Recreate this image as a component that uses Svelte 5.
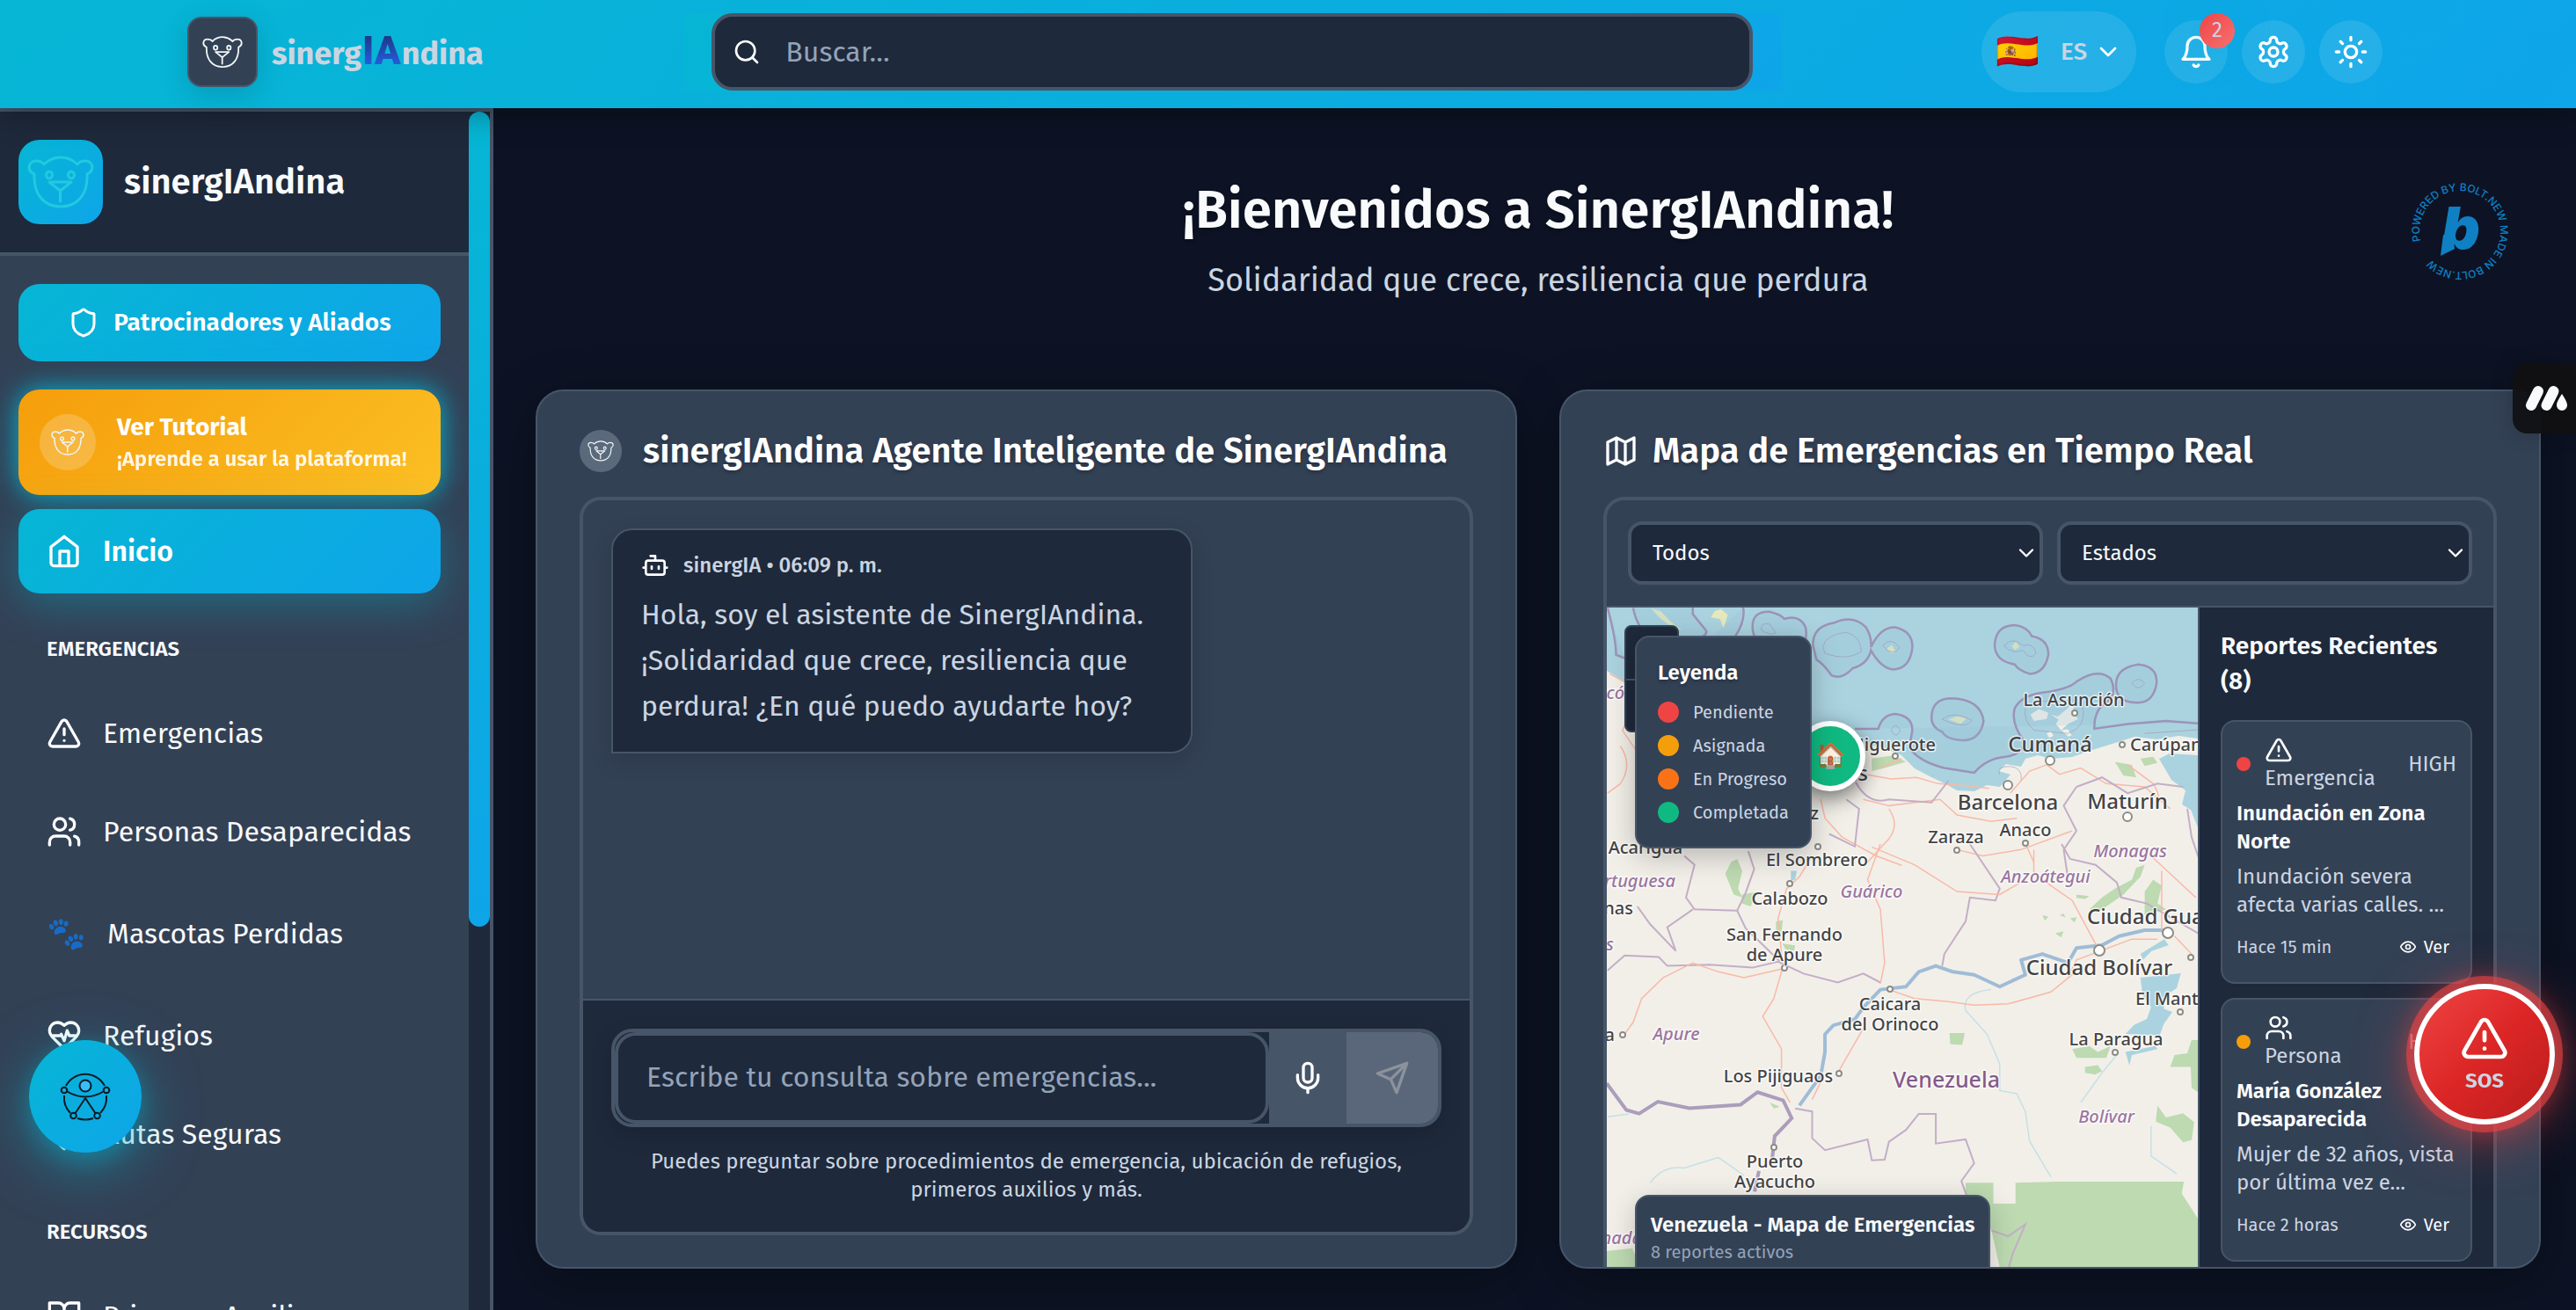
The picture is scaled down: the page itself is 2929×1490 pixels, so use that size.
<script>
  const circle = (cx, cy, r) => `M${cx - r} ${cy}a${r} ${r} 0 1 0 ${2 * r} 0a${r} ${r} 0 1 0 ${-2 * r} 0`;

  const icons = {
    search: circle(11, 11, 8) + 'M21 21l-4.3-4.3',
    chevron: 'm6 9 6 6 6-6',
    bell: 'M6 8a6 6 0 0 1 12 0c0 7 3 9 3 9H3s3-2 3-9M10.3 21a1.94 1.94 0 0 0 3.4 0',
    settings:
      'M12.22 2h-.44a2 2 0 0 0-2 2v.18a2 2 0 0 1-1 1.73l-.43.25a2 2 0 0 1-2 0l-.15-.08a2 2 0 0 0-2.73.73l-.22.38a2 2 0 0 0 .73 2.73l.15.1a2 2 0 0 1 1 1.72v.51a2 2 0 0 1-1 1.74l-.15.09a2 2 0 0 0-.73 2.73l.22.38a2 2 0 0 0 2.73.73l.15-.08a2 2 0 0 1 2 0l.43.25a2 2 0 0 1 1 1.73V20a2 2 0 0 0 2 2h.44a2 2 0 0 0 2-2v-.18a2 2 0 0 1 1-1.73l.43-.25a2 2 0 0 1 2 0l.15.08a2 2 0 0 0 2.73-.73l.22-.39a2 2 0 0 0-.73-2.73l-.15-.08a2 2 0 0 1-1-1.74v-.5a2 2 0 0 1 1-1.74l.15-.09a2 2 0 0 0 .73-2.73l-.22-.38a2 2 0 0 0-2.73-.73l-.15.08a2 2 0 0 1-2 0l-.43-.25a2 2 0 0 1-1-1.73V4a2 2 0 0 0-2-2z' +
      circle(12, 12, 3),
    sun:
      circle(12, 12, 4) +
      'M12 2v2M12 20v2M4.93 4.93l1.41 1.41M17.66 17.66l1.41 1.41M2 12h2M20 12h2M6.34 17.66l-1.41 1.41M19.07 4.93l-1.41 1.41',
    shield:
      'M20 13c0 5-3.5 7.5-7.66 8.95a1 1 0 0 1-.67-.01C7.5 20.5 4 18 4 13V6a1 1 0 0 1 1-1c2 0 4.5-1.2 6.24-2.72a1.17 1.17 0 0 1 1.52 0C14.51 3.81 17 5 19 5a1 1 0 0 1 1 1z',
    home: 'm3 9 9-7 9 7v11a2 2 0 0 1-2 2H5a2 2 0 0 1-2-2zM9 22V12h6v10',
    alert: 'm21.73 18-8-14a2 2 0 0 0-3.48 0l-8 14A2 2 0 0 0 4 21h16a2 2 0 0 0 1.73-3ZM12 9v4M12 17h.01',
    users:
      'M16 21v-2a4 4 0 0 0-4-4H6a4 4 0 0 0-4 4v2M22 21v-2a4 4 0 0 0-3-3.87M16 3.13a4 4 0 0 1 0 7.75' +
      circle(9, 7, 4),
    heart:
      'M19 14c1.49-1.46 3-3.21 3-5.5A5.5 5.5 0 0 0 16.5 3c-1.76 0-3 .5-4.5 2-1.5-1.5-2.74-2-4.5-2A5.5 5.5 0 0 0 2 8.5c0 2.3 1.5 4.05 3 5.5l7 7ZM3.22 12H9.5l.5-1 2 4.5 2-7 1.5 3.5h5.27',
    pin: 'M20 10c0 6-8 12-8 12s-8-6-8-12a8 8 0 0 1 16 0Z' + circle(12, 10, 3),
    book: 'M2 3h6a4 4 0 0 1 4 4v14a3 3 0 0 0-3-3H2zM22 3h-6a4 4 0 0 0-4 4v14a3 3 0 0 1 3-3h7z',
    bot: 'M12 8V4H8M6 8h12a2 2 0 0 1 2 2v8a2 2 0 0 1-2 2H6a2 2 0 0 1-2-2v-8a2 2 0 0 1 2-2ZM2 14h2M20 14h2M15 13v2M9 13v2',
    mic: 'M12 2a3 3 0 0 0-3 3v7a3 3 0 0 0 6 0V5a3 3 0 0 0-3-3ZM19 10v2a7 7 0 0 1-14 0v-2M12 19v3',
    send: 'm22 2-7 20-4-9-9-4ZM22 2 11 13',
    map: 'M3 6l6-3 6 3 6-3v15l-6 3-6-3-6 3zM9 3v15M15 6v15',
    eye: 'M2 12s3-7 10-7 10 7 10 7-3 7-10 7-10-7-10-7Z' + circle(12, 12, 3),
  };

  const emergencyLinks = [
    { icon: 'alert', label: 'Emergencias' },
    { icon: 'users', label: 'Personas Desaparecidas' },
    { emoji: '🐾', label: 'Mascotas Perdidas' },
    { icon: 'heart', label: 'Refugios' },
    { icon: 'pin', label: 'Rutas Seguras' },
  ];

  const legend = [
    { tone: 'red', label: 'Pendiente' },
    { tone: 'amber', label: 'Asignada' },
    { tone: 'orange', label: 'En Progreso' },
    { tone: 'green', label: 'Completada' },
  ];

  const reports = [
    {
      tone: 'red', icon: 'alert', type: 'Emergencia', priority: 'HIGH',
      title: 'Inundación en Zona Norte', text: 'Inundación severa afecta varias calles. ...', time: 'Hace 15 min',
    },
    {
      tone: 'amber', icon: 'users', type: 'Persona', priority: 'HIGH',
      title: 'María González Desaparecida', text: 'Mujer de 32 años, vista por última vez e...', time: 'Hace 2 horas',
    },
  ];

  // [text, x, y, anchor, kind]
  const places = [
    ['La Asunción', 531, 112, 'middle', 'town'],
    ['Cumaná', 504, 164, 'middle', 'city'],
    ['Carúpano', 595, 163, 'start', 'town'],
    ['Higuerote', 374, 163, 'end', 'town'],
    ['Caracas', 297, 197, 'end', 'city'],
    ['Barcelona', 456, 230, 'middle', 'city'],
    ['Maturín', 592, 229, 'middle', 'city'],
    ['Cruz', 241, 241, 'end', 'town'],
    ['Anaco', 476, 260, 'middle', 'town'],
    ['Zaraza', 397, 268, 'middle', 'town'],
    ['Monagas', 595, 284, 'middle', 'state'],
    ['Falcón', 32, 104, 'end', 'state'],
    ['Acarigua', 44, 280, 'middle', 'town'],
    ['El Sombrero', 239, 294, 'middle', 'town'],
    ['Calabozo', 208, 338, 'middle', 'town'],
    ['Guárico', 301, 330, 'middle', 'state'],
    ['Portuguesa', 78, 318, 'end', 'state'],
    ['Barinas', 30, 349, 'end', 'town'],
    ['Barinas', 8, 390, 'end', 'state'],
    ['San Fernando', 202, 379, 'middle', 'town'],
    ['de Apure', 202, 402, 'middle', 'town'],
    ['Caicara', 322, 458, 'middle', 'town'],
    ['del Orinoco', 322, 481, 'middle', 'town'],
    ['Ciudad Bolívar', 560, 418, 'middle', 'city'],
    ['Ciudad Guayana', 546, 360, 'start', 'city'],
    ['Anzoátegui', 499, 313, 'middle', 'state'],
    ['El Manteco', 601, 452, 'start', 'town'],
    ['La Paragua', 579, 498, 'middle', 'town'],
    ['Elorza', 9, 493, 'end', 'town'],
    ['Apure', 79, 492, 'middle', 'state'],
    ['Los Pijiguaos', 195, 540, 'middle', 'town'],
    ['Venezuela', 386, 546, 'middle', 'country'],
    ['Bolívar', 568, 586, 'middle', 'state'],
    ['Puerto', 191, 637, 'middle', 'town'],
    ['Ayacucho', 191, 660, 'middle', 'town'],
    ['Vichada', 40, 724, 'end', 'state'],
  ];

  const towns = [
    [532, 120, 3], [586, 156, 3], [504, 174, 5], [456, 202, 5], [328, 169, 3], [592, 238, 5], [476, 268, 3],
    [398, 276, 3], [240, 272, 3], [208, 314, 3], [202, 410, 3], [322, 434, 3], [560, 390, 6], [638, 370, 6],
    [664, 398, 3], [652, 460, 3], [578, 506, 3], [18, 486, 3], [264, 530, 3], [190, 614, 3],
  ];

  let query = $state('');
  let message = $state('');
  let kind = $state('Todos');
  let status = $state('Estados');
</script>

{#snippet icon(name)}
  <svg class="icon" viewBox="0 0 24 24" aria-hidden="true"><path d={icons[name]} /></svg>
{/snippet}

{#snippet bear()}
  <svg class="bear" viewBox="-2 -1 76 60" aria-hidden="true">
    <path d="M6 20C-3 16 -1 5 8 5c4 0 7 1 9 4C22 4 28 1 36 1s14 3 19 8c2-3 5-4 9-4 9 0 11 11 2 15 1 22-10 37-30 37S5 42 6 20z" />
    <ellipse cx="23" cy="21" rx="3.5" ry="4" /><ellipse cx="48" cy="21" rx="3.5" ry="4" />
    <path d="M23 29h25L35.500 39zM35.500 39v12" />
  </svg>
{/snippet}

<div class="app">
  <header class="topbar">
    <a class="brand" href="#inicio">
      <span class="brand-mark">{@render bear()}</span>
      <span class="brand-name">sinerg<b>IA</b>ndina</span>
    </a>
    <div class="search-band">
      <label class="search">
        {@render icon('search')}
        <input type="search" placeholder="Buscar..." aria-label="Buscar" bind:value={query} />
      </label>
    </div>
    <div class="actions">
      <button class="lang" type="button" aria-label="Idioma: español">
        <span class="flag">🇪🇸</span><span>ES</span>{@render icon('chevron')}
      </button>
      <button class="round" type="button" aria-label="Notificaciones">
        {@render icon('bell')}<span class="badge">2</span>
      </button>
      <button class="round" type="button" aria-label="Configuración">{@render icon('settings')}</button>
      <button class="round" type="button" aria-label="Tema claro">{@render icon('sun')}</button>
    </div>
  </header>

  <div class="body">
    <aside class="sidebar">
      <div class="side-scroll">
        <div class="side-head">
          <span class="side-logo">{@render bear()}</span>
          <strong>sinergIAndina</strong>
        </div>
        <nav class="side-nav">
          <a class="sponsors" href="#patrocinadores">{@render icon('shield')}Patrocinadores y Aliados</a>
          <button class="tutorial" type="button">
            <span class="tutorial-mark">{@render bear()}</span>
            <span class="tutorial-text"><b>Ver Tutorial</b><small>¡Aprende a usar la plataforma!</small></span>
          </button>
          <a class="link active" href="#inicio">{@render icon('home')}Inicio</a>
          <h2>EMERGENCIAS</h2>
          <ul>
            {#each emergencyLinks as l}
              <li>
                <a class="link" class:tall={l.emoji} href="#{l.label}">
                  {#if l.emoji}<span class="emoji">{l.emoji}</span>{:else}{@render icon(l.icon)}{/if}{l.label}
                </a>
              </li>
            {/each}
          </ul>
          <h2>RECURSOS</h2>
          <ul>
            <li><a class="link" href="#primeros-auxilios">{@render icon('book')}Primeros Auxilios</a></li>
          </ul>
        </nav>
      </div>
      <div class="track"><div class="thumb"></div></div>
    </aside>

    <main>
      <section class="hero">
        <h1>¡Bienvenidos a SinergIAndina!</h1>
        <p>Solidaridad que crece, resiliencia que perdura</p>
        <a class="bolt" href="#bolt" aria-label="Powered by Bolt.new">
          <svg viewBox="0 0 120 120">
            <defs><path id="ring" d="M15.400 71.100A46 46 0 1 1 15.500 71.500" /></defs>
            <text class="ring-text"><textPath href="#ring">POWERED BY BOLT.NEW MADE IN BOLT.NEW</textPath></text>
            <text class="bolt-b" x="39" y="81">b</text>
            <path class="bolt-tail" d="M41 64L38 88L54 80L52 66z" />
          </svg>
        </a>
      </section>

      <div class="cards">
        <section class="card">
          <h2 class="card-title"><span class="avatar">{@render bear()}</span>sinergIAndina Agente Inteligente de SinergIAndina</h2>
          <div class="chat">
            <div class="messages">
              <article class="message">
                <header>{@render icon('bot')}<span>sinergIA • 06:09 p. m.</span></header>
                <p>Hola, soy el asistente de SinergIAndina. ¡Solidaridad que crece, resiliencia que perdura! ¿En qué puedo ayudarte hoy?</p>
              </article>
            </div>
            <form class="composer" onsubmit={(e) => e.preventDefault()}>
              <div class="composer-row">
                <input type="text" placeholder="Escribe tu consulta sobre emergencias..." aria-label="Consulta" bind:value={message} />
                <button class="mic" type="button" aria-label="Dictar">{@render icon('mic')}</button>
                <button class="send" type="submit" aria-label="Enviar" disabled={!message}>{@render icon('send')}</button>
              </div>
              <p>Puedes preguntar sobre procedimientos de emergencia, ubicación de refugios, primeros auxilios y más.</p>
            </form>
          </div>
        </section>

        <section class="card">
          <h2 class="card-title map-title">{@render icon('map')}Mapa de Emergencias en Tiempo Real</h2>
          <div class="mapbox">
            <div class="filters">
              <div class="select">
                <select aria-label="Tipo" bind:value={kind}><option>Todos</option><option>Emergencias</option></select>
                {@render icon('chevron')}
              </div>
              <div class="select">
                <select aria-label="Estado" bind:value={status}><option>Estados</option><option>Pendiente</option></select>
                {@render icon('chevron')}
              </div>
            </div>
            <div class="map-body">
              <div class="map">
                <svg class="terrain" viewBox="0 0 672 750" preserveAspectRatio="xMinYMin slice" role="img" aria-label="Mapa de Venezuela">
                  <rect width="672" height="750" fill="#f2efe9" />
                  <path fill="#aad3df" d="M0 0H672V149L650 146L625 150L600 147L578 154L549 163L529 170L505 172L490 168L476 172L471 181L454 178L446 186L459 190L447 204L432 202L418 209L398 208L384 200L369 193L350 183L335 168L316 160L290 154L250 150L120 150L60 100L20 84L0 72z" />
                  <path fill="#aad3df" d="M628 172L640 166L672 168V250L664 230L654 224L658 208L642 196z" />
                  <g class="scaled" transform="translate(-67 -271) scale(.4847 .3571)">
                    <path fill="#bddab1" d="M760 1240l50-10 30 20-50 20-30 10zM1330 1250l40 10 10 40-30-6zM1390 1240l30-6 10 20-30 10z" />
                    <path fill="#f2efe9" d="M1132 1100l20-18 22 12-4 20-30 6zM1180 1100l16 6 20-22 18-20-2 30 12 20-24 16-16 20-12-20 6-14zM1170 1160l10-8 6 16-10 6zM1205 1150l14-4 10 20-8 4z" />
                    <path fill="#e6e8bd" d="M940 1115l22-10 20 8-14 16zM1088 882l10-14 8 16-10 10zM795 890l12-12 8 20-8 8zM242 762l22 8 24 34 26 26-20-6-30-30zM392 770l14-6 16 18-10 44-8-30-22-6z" />
                    <path class="sea" d="M200 760Q210 830 250 870Q290 900 330 870Q380 850 370 830L340 780V758M458 758Q464 800 440 850Q420 890 380 860M140 760Q160 860 160 910L180 920" />
                    <path class="sea" d="M480 820Q480 770 520 772Q545 780 555 795Q590 780 604 820Q612 860 590 900Q560 930 520 890Q480 870 480 820z" />
                    <path class="sea" d="M622 880Q620 820 670 808Q715 780 745 820Q760 850 758 885Q780 820 815 822Q856 835 855 885Q850 955 808 956Q780 950 758 895Q750 940 715 952Q690 990 665 975Q648 940 630 925z" />
                    <path class="sea" d="M1048 880Q1050 815 1095 815Q1125 820 1135 850Q1175 860 1174 910Q1165 970 1130 970Q1105 960 1095 940Q1050 930 1048 880z" />
                    <path class="sea" d="M900 1110Q900 1050 945 1048Q1015 1050 1022 1120Q1015 1180 975 1182Q935 1180 925 1155Q900 1140 900 1110z" />
                    <path class="sea" d="M1333 1000Q1335 950 1385 940Q1430 945 1428 1000Q1420 1065 1380 1062Q1330 1060 1333 1000z" />
                    <path class="sea" d="M720 1145H775Q785 1100 815 1098Q855 1105 855 1150L848 1205Q870 1250 930 1270L1000 1285Q1030 1240 1070 1235Q1110 1230 1120 1190Q1085 1130 1095 1080Q1110 1040 1160 1030Q1220 1020 1240 995Q1290 950 1320 985Q1340 1040 1300 1070Q1280 1100 1282 1145L1360 1130L1450 1120L1528 1128" />
                    <path class="sea thin" d="M500 830Q500 805 520 812L535 840Q520 850 500 830M645 885Q650 845 700 838Q735 850 735 900Q700 930 650 905zM785 880Q805 850 825 885Q810 920 785 880M1070 880Q1090 850 1115 880Q1140 870 1145 905Q1130 930 1115 895Q1090 910 1070 880M925 1115Q950 1085 995 1118Q980 1150 925 1115M1370 1000Q1385 975 1400 1000Q1385 1030 1370 1000M805 1150q10-30 22 0q-10 30-22 0M1120 1080Q1130 1050 1200 1060Q1250 1040 1256 1090Q1260 1140 1220 1160L1140 1150Q1115 1120 1120 1080M1060 1290Q1050 1265 1085 1265Q1115 1270 1110 1310M1400 1160L1528 1148" />
                    <path class="road" d="M745 1290l60 15 60-5 50 20 60 5 60 10M780 1270L830 1240M1085 1350L1130 1280L1180 1255M1170 1260l30 30 50-20 60 50 90 10 60 70M1430 1400q10-40-10-80l-60-60M740 1370l60 20 120-20 40 50 80 20 60-10M640 1370l10 60 40 60 80 60 60 30M800 1400q30 60-10 110l-40 60M1120 1510l20 60M960 1530l60 20 90-20 120-60M145 970l40 30 10 90-20 60 30 60M170 1200q30 60 0 120l-30 30" />
                    <path class="limit" d="M720 1310q30 80 80 60l100 10 40-70M700 1370l30 30-10 120-60-40M1240 1330l-30 60 30 80-30 60 10 90M1240 1330l60-30 60 50 70-30 60 10M1500 1400l10 90 20 80" />
                  </g>
                  <g class="scaled" transform="translate(-67 269) scale(.4847 .338)">
                    <path class="wood" d="M980 1140h65v70h52v-70l100-4h295l-5 40 40 90v160H1060l-20-130h-60zM138 1370l60-10 20 70h-80zM942 636h36l-6 40-28-2zM1510 660h20v180l-20-20-2-70h-48l10-40 30-6zM1330 150l40-30 10-40 20-10-10 40-40 60-20 20-40 40-20-10 30-40zM1400 160l20-40 20 20-10 60 20 20-50 20zM1240 170l30 5-10 10-20-4zM430 60l14-10 12 40-10 60 10 30-20-10-20-70zM455 170l40-10-20 50-20-10zM535 260l16-4-4 60-12 10zM550 335l30 6-2 18-20-4zM1230 690l40-10 20 20 30-20-10 40-40 0-30 0zM1260 750l30-6 10 20-16 12-24-6zM1430 880l20 40 40-14 26 30-6 60-20 8-30-50-34-20zM520 870l24 14-14 6z" />
                    <path class="wood" d="M1160 240l14 4-8 14zM1190 300l20-6-6 20zM1200 240l10-6 4 12zM1225 250l16-4-6 18z" />
                    <path class="lake" d="M1390 450l95-15-10 50-30 30 0 40 20 10-20 40-10 40-80-6 20-30 30-20 10-40-20-40zM1446 320l10 20-40 20-20 30-6-20zM1355 700l70-20 5 10-60 20-6 35zM1330 700l20-5M570 90h14l-4 30-10 4z" />
                    <path class="river" d="M1460 290l-60 0-60 20-40 30-60 10-20 50-60-30-50 20 10 50-60 40-60-40-50-10-40-20-40 20-30 50-60 10-40 60-20 40-50 20-20 30 0 60-10 80-30 60-20 40" />
                    <path class="river small" d="M980 560q-10-60 60-70M980 560l50 80 30 100v90l40 10 20 60 10 100 50 120M1340 700l-40 70-50 100M140 918l50-10M240 1140q30-60 80-50l80-35 60 60M1415 950v100l60 60" />
                    <path class="limit strong" d="M138 805l46 90 30 12 44-40 74 22 120-12 40-42 60 28 20 60-40 60-6 80M495 1100l-10 70" />
                    <path class="limit" d="M320 40l24 30-20 110 20 40 100 4 20-60 20-80-14-60M444 224l20 60 80 110M340 220l-60 60 20 80-60-90-30-60M140 425l40-50 80 5 20 30 100-4 100 10 60-20 60 40 80 30 60-30 40 30M990 0l70 150-10 40-60-10-10 80-50 110-5 40M1205 0l20 50 60 20 50 60 10 50 60 20 120 100M580 890l40 10 0 90 30 40 100-36 10 70 30-2 10-60 40-40 30-54h40v100l70-14 20 80-30 60 20 80M1040 1300l40 20 40-40-30 100-10 50" />
                    <path class="road" d="M620 40l-30 70-30 40-20 100 10 150M550 420l-90 30-60-20-60-30-70 50-50 70-20 80-20 40M550 420l-20 100-26 60 44 110v130l20 50M780 0l-30 120 30 100 10 180-10 70M800 490l60 30 80 10 60 12 80-4 100-40 60-70M1220 450l20-60 130-70 60 0M1140 20l0 80 90 90 60 160M1440 90l0 200M1400 20l120 160M740 620l-40 100-20 50M620 860l20-60M760 10l100 60 100 90 100 10 60-50M1470 310l40 60" />
                  </g>
                  {#each towns as [x, y, r]}<circle class="dot-town" cx={x} cy={y} {r} />{/each}
                  {#each places as [text, x, y, anchor, type]}
                    <text class="place {type}" {x} {y} text-anchor={anchor}>{text}</text>
                  {/each}
                </svg>
                <div class="zoom">
                  <button type="button" aria-label="Acercar"></button>
                  <button type="button" aria-label="Alejar"></button>
                </div>
                <span class="marker">🏠</span>
                <div class="legend">
                  <h3>Leyenda</h3>
                  <ul>
                    {#each legend as l}<li><i class="dot {l.tone}"></i>{l.label}</li>{/each}
                  </ul>
                </div>
                <div class="map-info"><strong>Venezuela - Mapa de Emergencias</strong><span>8 reportes activos</span></div>
              </div>
              <div class="reports">
                <h3>Reportes Recientes (8)</h3>
                {#each reports as r}
                  <article class="report">
                    <div class="report-top">
                      <i class="dot {r.tone}"></i>
                      <span class="type">{@render icon(r.icon)}{r.type}</span>
                      <span>{r.priority}</span>
                    </div>
                    <h4>{r.title}</h4>
                    <p>{r.text}</p>
                    <footer><time>{r.time}</time><button type="button">{@render icon('eye')}Ver</button></footer>
                  </article>
                {/each}
              </div>
            </div>
          </div>
        </section>
      </div>
    </main>
  </div>

  <button class="access" type="button" aria-label="Accesibilidad">
    <svg viewBox="0 0 56 56" aria-hidden="true">
      <path d="M6 16A25 25 0 0 1 50 16M4 27Q3 39 11 47M52 27Q53 39 45 47M19 53Q28 56 37 53" />
      <path d="M6.500 22Q28 35 49.500 22M28 30L16 48M28 30L40 48" />
      <circle class="head" cx="28" cy="16" r="6.500" />
      <circle class="joint" cx="4" cy="21" r="3.300" /><circle class="joint" cx="52" cy="21" r="3.300" />
      <circle class="joint" cx="14.500" cy="50" r="3.300" /><circle class="joint" cx="41.500" cy="50" r="3.300" />
    </svg>
  </button>

  <button class="widget" type="button" aria-label="Abrir panel">
    <svg viewBox="0 0 48 28" aria-hidden="true">
      <path class="bar" d="M6 22L14 6M23.500 22L31.500 6" />
      <path class="drop" d="M41 9C44 14 47 18 47 22A6 6 0 0 1 35 22C35 18 38 14 41 9z" />
    </svg>
  </button>

  <button class="sos" type="button">{@render icon('alert')}SOS</button>
</div>

<style>
  :global(body) { background: #0d1324; }
  .app, .app :global(*) { box-sizing: border-box; }
  .app {
    height: 100vh;
    display: flex;
    flex-direction: column;
    overflow: hidden;
    font-family: 'Fira Sans', 'Noto Sans', sans-serif;
    color: #f8fafc;
    font-size: 24px;
    line-height: 32px;
  }
  button, input, select { font: inherit; color: inherit; border: 0; margin: 0; padding: 0; background: none; }
  a { color: inherit; text-decoration: none; }
  h1, h2, h3, h4, p, ul { margin: 0; padding: 0; }
  ul { list-style: none; }
  .icon { width: 40px; height: 40px; flex: none; fill: none; stroke: #fff; stroke-width: 2; stroke-linecap: round; stroke-linejoin: round; }
  .bear { display: block; fill: none; stroke: #f1f5f9; stroke-width: 3; stroke-linejoin: round; stroke-linecap: round; }

  .topbar {
    position: relative;
    z-index: 5;
    flex: none;
    height: 123px;
    padding: 0 220px 5px 213px;
    display: flex;
    align-items: center;
    justify-content: space-between;
    background: linear-gradient(135deg, #06b6d4, #0ea5e9);
    box-shadow: 0 8px 32px rgba(0, 0, 0, 0.3);
  }
  .brand { display: flex; align-items: center; gap: 16px; }
  .brand-mark {
    width: 80px; height: 80px; border-radius: 16px; border: 2px solid #475569; background: #334155;
    display: grid; place-items: center; box-shadow: 0 8px 32px rgba(0, 0, 0, 0.15);
  }
  .brand-mark .bear { width: 46px; }
  .brand-name { font-size: 36px; line-height: 48px; font-weight: 700; color: #cbd5e1; }
  .brand-name b {
    font-family: Roboto, sans-serif; font-size: 44px; font-weight: 900; padding: 0 1px;
    background: linear-gradient(180deg, #1e3a8a 20%, #2563eb 90%); background-clip: text; color: transparent;
  }
  .search-band { width: 1248px; padding: 0 32px; background: linear-gradient(135deg, #06b6d4, #0ea5e9); }
  .search {
    display: flex; align-items: center; gap: 28px; height: 88px; padding: 0 20px;
    border: 4px solid #475569; border-radius: 24px; background: #1e293b;
  }
  .search .icon { width: 32px; height: 32px; }
  .search input { flex: 1; min-width: 0; font-size: 32px; outline: 0; }
  input::placeholder { color: #94a3b8; opacity: 1; }
  .actions { display: flex; align-items: center; gap: 16px; }
  .lang {
    display: flex; align-items: center; width: 176px; height: 92px; padding: 0 16px; margin-right: 16px;
    border-radius: 46px; background: rgba(255, 255, 255, 0.1); font-size: 28px; font-weight: 500; color: #cbd5e1;
  }
  .lang .icon { width: 32px; height: 32px; margin-left: auto; }
  .flag { font-size: 40px; line-height: 48px; margin-right: 24px; }
  .round {
    position: relative; width: 72px; height: 72px; border-radius: 50%; background: rgba(255, 255, 255, 0.1);
    display: grid; place-items: center;
  }
  .badge {
    position: absolute; top: -8px; right: -8px; width: 40px; height: 40px; border-radius: 50%;
    background: linear-gradient(135deg, #ef4444, #f87171); color: #cbd5e1; line-height: 38px; text-align: center;
    box-shadow: 0 0 40px rgba(6, 182, 212, 0.4);
  }

  .body { flex: 1; min-height: 0; display: flex; }
  .sidebar { width: 561px; flex: none; display: flex; border-top: 4px solid #475569; border-right: 4px solid #475569; background: #334155; }
  .side-scroll { flex: 1; min-width: 0; overflow: hidden; }
  .side-head {
    height: 164px; padding: 0 21px; display: flex; align-items: center; gap: 24px;
    background: #1e293b; border-bottom: 4px solid #475569; font-size: 40px; line-height: 48px;
  }
  .side-head strong { font-weight: 600; }
  .side-logo { width: 96px; height: 96px; border-radius: 24px; display: grid; place-items: center; background: linear-gradient(135deg, #06b6d4, #0ea5e9); }
  .side-logo .bear { width: 76px; stroke: #22c9e0; }
  .side-nav { padding: 32px 32px 0 21px; display: flex; flex-direction: column; }
  .sponsors {
    height: 88px; border-radius: 24px; display: flex; align-items: center; justify-content: center; gap: 16px;
    font-size: 28px; font-weight: 600; background: linear-gradient(135deg, #06b6d4, #0ea5e9); color: #fff;
  }
  .sponsors .icon { width: 36px; height: 36px; }
  .tutorial {
    margin-top: 32px; height: 120px; padding: 0 24px; border-radius: 24px; display: flex; align-items: center; gap: 24px;
    text-align: left; color: #fff; background: linear-gradient(135deg, #f59e0b, #fbbf24);
    box-shadow: 0 0 28px rgba(6, 182, 212, 0.9), 0 0 56px rgba(6, 182, 212, 0.2);
  }
  .tutorial-mark { width: 64px; height: 64px; border-radius: 50%; background: rgba(255, 255, 255, 0.2); display: grid; place-items: center; }
  .tutorial-mark .bear { width: 38px; }
  .tutorial-text { display: flex; flex-direction: column; padding-top: 2px; }
  .tutorial-text b { font-size: 28px; line-height: 36px; font-weight: 700; }
  .tutorial-text small { font-size: 24px; line-height: 36px; font-weight: 600; opacity: 0.9; }
  .link { height: 96px; padding: 0 32px; display: flex; align-items: center; gap: 24px; font-size: 32px; line-height: 48px; white-space: nowrap; }
  .link.tall { height: 104px; }
  .link.active {
    margin-top: 16px; border-radius: 24px; font-weight: 600; color: #fff;
    background: linear-gradient(135deg, #06b6d4, #0ea5e9); box-shadow: 0 12px 48px rgba(6, 182, 212, 0.35);
  }
  .emoji { font-size: 36px; }
  .side-nav h2 { margin: 47px 0 32px; padding: 0 32px; font-size: 24px; line-height: 32px; font-weight: 600; }
  .side-nav ul { display: flex; flex-direction: column; gap: 16px; }
  .track { width: 24px; background: #1e293b; }
  .thumb { height: 68%; border-radius: 12px; background: linear-gradient(180deg, #06b6d4, #0ea5e9); }

  main { flex: 1; min-width: 0; padding: 78px 40px 0 48px; overflow: hidden; }
  .hero { position: relative; height: 242px; text-align: center; }
  h1 { font-size: 60px; line-height: 76px; font-weight: 600; text-shadow: 0 2px 4px rgba(0, 0, 0, 0.3); }
  .hero p { margin-top: 14px; font-size: 36px; line-height: 56px; color: #cbd5e1; }
  .bolt { position: absolute; right: 32px; top: 2px; width: 120px; height: 120px; }
  .bolt svg { display: block; overflow: visible; }
  .bolt path { fill: none; }
  .ring-text { font: 500 12px Inter, sans-serif; fill: #0f80c4; }
  .bolt-b { font: italic 900 68px Inter, sans-serif; fill: #0f80c4; }
  .bolt .bolt-tail { fill: #0f80c4; }

  .cards { display: grid; grid-template-columns: 1fr 1fr; gap: 48px; }
  .card {
    height: 1000px; min-width: 0; padding: 44px 48px 36px; border: 2px solid #475569; border-radius: 32px; overflow: hidden;
    background: #334155; box-shadow: 0 16px 64px rgba(0, 0, 0, 0.3); display: flex; flex-direction: column;
  }
  .card-title { flex: none; height: 76px; padding-bottom: 28px; display: flex; align-items: center; gap: 24px; font-size: 40px; line-height: 48px; font-weight: 600; white-space: nowrap; text-shadow: 0 2px 4px rgba(0, 0, 0, 0.3); color: #fff; }
  .map-title { gap: 16px; }
  .avatar { width: 48px; height: 48px; border-radius: 50%; background: #5b697c; display: grid; place-items: center; }
  .avatar .bear { width: 30px; }

  .chat { flex: 1; min-height: 0; border: 4px solid #475569; border-radius: 24px; overflow: hidden; display: flex; flex-direction: column; }
  .messages { flex: 1; padding: 32px; }
  .message { width: 70%; padding: 24px 32px 26px; border: 2px solid #475569; border-radius: 24px 24px 24px 0; background: #1e293b; box-shadow: 0 8px 24px rgba(0, 0, 0, 0.15); color: #cbd5e1; }
  .message header { display: flex; align-items: center; gap: 16px; font-weight: 500; margin-bottom: 14px; }
  .message .icon { width: 32px; height: 32px; }
  .message p { font-size: 32px; line-height: 52px; }
  .composer { padding: 32px; border-top: 2px solid #475569; background: #1e293b; }
  .composer-row { display: flex; height: 112px; border: 4px solid #475569; border-radius: 24px; overflow: hidden; box-shadow: 0 8px 24px rgba(0, 0, 0, 0.15); }
  .composer-row input { flex: 1; min-width: 0; padding: 0 32px 2px; border: 4px solid #475569; border-radius: 24px; font-size: 32px; outline: 0; }
  .mic { width: 88px; background: #475569; display: grid; place-items: center; }
  .send { width: 104px; background: #5a677a; display: grid; place-items: center; }
  .send .icon { stroke: #8b929c; }
  .composer p { margin-top: 23px; padding: 0 32px; text-align: center; color: #cbd5e1; }

  .mapbox { flex: none; height: 960px; border: 4px solid #475569; border-radius: 24px; overflow: hidden; display: flex; flex-direction: column; }
  .filters { display: grid; grid-template-columns: 1fr 1fr; gap: 16px; padding: 24px; border-bottom: 2px solid #475569; }
  .select { position: relative; }
  .select select { display: block; width: 100%; height: 72px; padding: 0 24px; border: 4px solid #475569; border-radius: 16px; background: #1e293b; appearance: none; }
  .select .icon { position: absolute; right: 5px; top: 22px; width: 28px; height: 28px; pointer-events: none; }
  .map-body { flex: 1; min-height: 0; display: grid; grid-template-columns: 2fr 1fr; }
  .map { position: relative; min-width: 0; overflow: hidden; background: #f2efe9; height: 750px; }
  .terrain { display: block; width: 100%; height: 100%; }
  .scaled path { vector-effect: non-scaling-stroke; }
  .sea { fill: rgba(145, 190, 215, 0.2); stroke: #9c93b8; stroke-width: 2.500; }
  .sea.thin { fill: none; stroke-width: 1; opacity: 0.6; }
  .road { fill: none; stroke: #f9b9a6; stroke-width: 1.500; }
  .limit { fill: none; stroke: #c3aec6; stroke-width: 2; }
  .limit.strong { stroke: #ab9dbb; stroke-width: 4; }
  .wood { fill: #bddab1; }
  .lake { fill: #aad3df; }
  .river { fill: none; stroke: #9fbcd6; stroke-width: 4; stroke-linejoin: round; }
  .river.small { stroke: #c5e0e6; stroke-width: 1.500; }
  .dot-town { fill: #fff; stroke: #8c8c85; stroke-width: 2; }
  .place { font-family: 'Noto Sans', sans-serif; font-size: 20px; font-weight: 500; fill: #444; paint-order: stroke; stroke: rgba(255, 255, 255, 0.7); stroke-width: 3px; stroke-linejoin: round; }
  .city { font-size: 24px; }
  .state { font-style: italic; fill: #9a76a0; }
  .country { font-size: 25px; fill: #855b8a; }
  .zoom { position: absolute; left: 20px; top: 20px; width: 62px; border-radius: 8px; overflow: hidden; background: #1e293b; border: 2px solid #33455a; }
  .zoom button { display: block; width: 100%; height: 59px; }
  .zoom button + button { border-top: 2px solid #475569; }
  .marker {
    position: absolute; left: 214px; top: 129px; width: 80px; height: 80px; border: 6px solid #fff; border-radius: 50%;
    background: #10b981; display: grid; place-items: center; font-size: 28px; box-shadow: 0 8px 24px rgba(0, 0, 0, 0.55);
  }
  .legend {
    position: absolute; left: 32px; top: 32px; padding: 24px; border: 2px solid #475569; border-radius: 16px;
    background: #334155; box-shadow: 0 8px 32px rgba(0, 0, 0, 0.25); color: #cbd5e1; font-size: 20px; line-height: 30px;
  }
  .legend h3 { font-size: 24px; line-height: 32px; font-weight: 600; color: #fff; margin-bottom: 14px; text-shadow: 0 2px 4px rgba(0, 0, 0, 0.3); }
  .legend ul { display: flex; flex-direction: column; gap: 8px; }
  .legend li { display: flex; align-items: center; gap: 16px; }
  .legend .dot { width: 24px; height: 24px; }
  .dot { flex: none; width: 16px; height: 16px; border-radius: 50%; }
  .red { background: #ef4444; }
  .amber { background: #f59e0b; }
  .orange { background: #f97316; }
  .green { background: #10b981; }
  .map-info {
    position: absolute; left: 32px; top: 668px; padding: 16px; border: 2px solid #475569; border-radius: 16px; background: #334155;
    display: flex; flex-direction: column; box-shadow: 0 8px 32px rgba(0, 0, 0, 0.2); white-space: nowrap;
  }
  .map-info strong { font-weight: 600; line-height: 32px; }
  .map-info span { font-size: 20px; line-height: 30px; color: #94a3b8; }

  .reports { min-width: 0; border-left: 2px solid #475569; background: #1e293b; padding: 24px; }
  .reports h3 { font-size: 28px; line-height: 40px; font-weight: 600; margin-bottom: 24px; }
  .report { padding: 16px; margin-bottom: 16px; border: 2px solid #475569; border-radius: 16px; background: #334155; color: #cbd5e1; }
  .report-top { display: flex; align-items: center; gap: 16px; }
  .type { flex: 1; display: flex; flex-direction: column; }
  .type .icon { width: 32px; height: 32px; }
  .report h4 { margin: 8px 0; font-weight: 600; font-size: 24px; color: #fff; }
  .report footer { margin-top: 8px; display: flex; align-items: center; justify-content: space-between; font-size: 20px; }
  .report button { height: 48px; padding: 0 8px; display: flex; align-items: center; gap: 8px; color: #fff; }
  .report button .icon { width: 20px; height: 20px; }

  .access {
    position: fixed; z-index: 6; left: 33px; bottom: 179px; width: 128px; height: 128px; border-radius: 50%;
    display: grid; place-items: center; background: linear-gradient(135deg, #06b6d4, #0ea5e9);
    box-shadow: 0 16px 64px rgba(6, 182, 212, 0.5), 0 8px 24px rgba(6, 182, 212, 0.3);
  }
  .access svg { width: 56px; height: 56px; overflow: visible; fill: none; stroke: #0b1a26; stroke-width: 2; }
  .access .head { fill: #38bdf8; }
  .access .joint { fill: #0eafe0; }
  .widget {
    position: fixed; z-index: 6; right: 0; top: 413px; width: 72px; height: 80px; padding-left: 15px; border-radius: 16px 0 0 16px;
    background: rgba(17, 17, 19, 0.95); display: flex; align-items: center; box-shadow: 0 0 24px rgba(0, 0, 0, 0.2);
  }
  .widget svg { width: 48px; height: 28px; overflow: visible; }
  .bar { stroke: #f8fafc; stroke-width: 12; stroke-linecap: round; }
  .drop { fill: #f8fafc; }
  .sos {
    position: fixed; z-index: 6; right: 24px; bottom: 211px; width: 160px; height: 160px; border: 6px solid #fff; border-radius: 50%;
    display: flex; flex-direction: column; align-items: center; justify-content: center; gap: 4px;
    font-weight: 700; line-height: 32px; color: #cbd5e1;
    background: linear-gradient(135deg, #ef4444, #dc2626 50%, #b91c1c);
    box-shadow: 0 0 0 9px rgba(239, 68, 68, 0.6), 0 12px 64px rgba(239, 68, 68, 0.6), 0 0 32px rgba(239, 68, 68, 0.5);
  }
  .sos .icon { width: 56px; height: 56px; }
</style>
